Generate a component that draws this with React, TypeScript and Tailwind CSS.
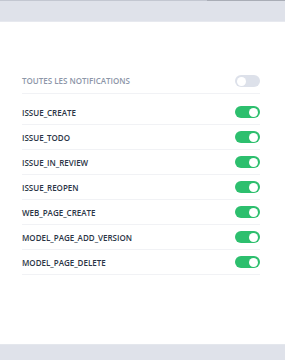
const events = [
  "ISSUE_CREATE",
  "ISSUE_TODO",
  "ISSUE_IN_REVIEW",
  "ISSUE_REOPEN",
  "WEB_PAGE_CREATE",
  "MODEL_PAGE_ADD_VERSION",
  "MODEL_PAGE_DELETE",
];

function Toggle({ on }: { on: boolean }) {
  return (
    <div
      className={`flex h-[12px] w-[25px] items-center rounded-full px-[2px] ${
        on ? "justify-end bg-[#2dbf6e]" : "justify-start bg-[#dde1ea]"
      }`}
    >
      <span className="h-[9px] w-[9px] rounded-full bg-white" />
    </div>
  );
}

export default function App() {
  return (
    <div className="flex h-[360px] w-[285px] flex-col bg-white font-['Open_Sans',sans-serif]">
      {/* top bar */}
      <div className="flex h-px shrink-0">
        <div className="w-[207px] bg-[#c3c7d1]" />
        <div className="flex-1 bg-[#a9adb6]" />
      </div>
      <div className="h-[21px] shrink-0 border-b border-[#e7e9ef] bg-[#dfe2ea]" />

      {/* settings */}
      <div className="flex-1 pl-[22px] pr-[25px] pt-[47px]">
        <div className="flex h-[25px] items-center justify-between border-b border-[#f1f2f5]">
          <span className="text-[8px] font-semibold uppercase text-[#8d96a8]">Toutes les notifications</span>
          <Toggle on={false} />
        </div>
        <div className="mt-[6px]">
          {events.map((e) => (
            <div key={e} className="flex h-[25px] items-center justify-between border-b border-[#f1f2f5]">
              <span className="pt-px text-[8px] font-semibold text-[#2b3546]">{e}</span>
              <Toggle on />
            </div>
          ))}
        </div>
      </div>

      {/* bottom bar */}
      <div className="h-[16px] shrink-0 border-t border-[#e4e7ed] bg-[#dfe2ea]" />
    </div>
  );
}
